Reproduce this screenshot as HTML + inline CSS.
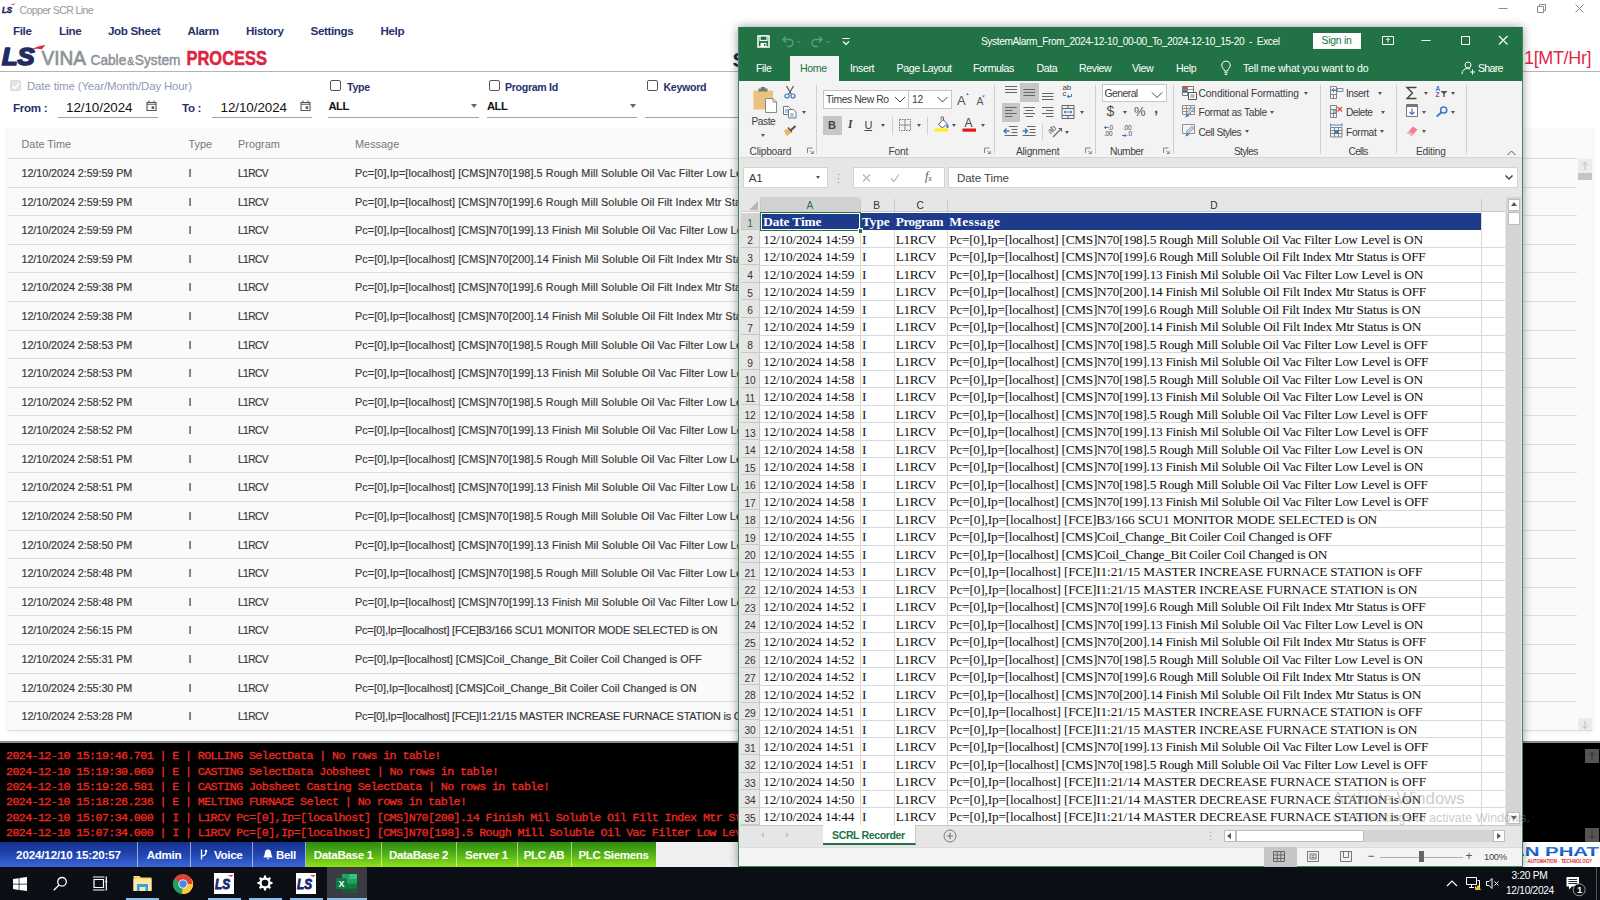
<!DOCTYPE html>
<html lang="en"><head><meta charset="utf-8"><title>Copper SCR Line</title>
<style>
*{box-sizing:border-box;margin:0;padding:0}
html,body{width:1600px;height:900px;overflow:hidden;background:#fff}
body{position:relative;font-family:"Liberation Sans",sans-serif;font-size:10px;color:#222}
.abs,#app *,#xl *,#tb *{position:absolute}
#app span,#xl span,#tb span{white-space:pre;line-height:1}
svg{overflow:visible}
/* ============ background app ============ */
#app{position:absolute;left:0;top:0;width:1600px;height:867px;background:#fff;overflow:hidden}
#ttl{left:19.600px;top:4.5px;font-size:10.5px;color:#979797;letter-spacing:-.6px}
.mn{top:25px;font-size:11.6px;font-weight:bold;color:#27306e;letter-spacing:-.35px}
#hr1{left:0;top:71px;width:1600px;height:1px;background:#b4b4b4}
.flab{font-size:10.6px;font-weight:bold;color:#27306e;letter-spacing:-.3px}
.fval{font-size:13.4px;color:#111;letter-spacing:-.05px}
.ful{height:1.3px;background:#a2a2a2;top:117px}
.cb{width:11px;height:11px;border:1px solid #555;border-radius:2px;background:#fff;top:80px}
#card{left:8px;top:127px;width:1584px;height:604px;border-bottom:1px solid #dcdcdc;clip-path:inset(1px -6px -6px -6px);background:#fafafa;box-shadow:0 0 4px rgba(0,0,0,.10);overflow:hidden}
.ah,.ar{left:0;width:1569px;height:28.58px}
.ah{top:3px;color:#777;font-size:10.9px}
.ar{border-top:1px solid #dedede;font-size:10.8px;color:#333}
.ah span,.ar span{top:9px}
.ar span{letter-spacing:.11px;color:#383838;top:9.4px;-webkit-text-stroke:.18px #383838}
.ar .c1{letter-spacing:-.07px}.ar .c3{font-size:10.2px;letter-spacing:-.55px;top:9.9px}
.ah span{letter-spacing:0;top:8.5px}
.c1{left:13.5px}.c2{left:180.5px}.c3{left:230px}.c4{left:347px}
#log{left:0;top:741px;width:1600px;height:101px;background:#000;border-top:2.400px solid #8e8e8e;overflow:hidden}
.ll{position:static!important;font-family:"Liberation Mono","DejaVu Sans Mono",monospace;font-size:11.7px;color:#f02a22;-webkit-text-stroke:.3px #f02a22;white-space:pre;height:15.3px;line-height:15.3px;letter-spacing:-.62px;padding-left:6px}
#log .ll:first-child{margin-top:6.4px}
/* status bar */
#sb{left:0;top:842px;width:1600px;height:25px;background:#f0f0f0}
.sbb{top:0;height:25px;color:#fff;font-weight:bold;font-size:11.6px;text-align:center;line-height:26.5px;letter-spacing:-.35px;white-space:nowrap;border-right:1px solid rgba(255,255,255,.55)}
.sbb.b{background:linear-gradient(#15318f 0%,#1f43ad 45%,#3b66da 100%)}
.sbb.g{background:linear-gradient(#2c8a10 0%,#4fae14 45%,#90e01a 100%)}
/* ============ excel ============ */
#xlw{position:absolute;left:738px;top:26.500px;width:785px;height:840.500px;background:#e6e6e6;border:1px solid #3c8a5f;box-shadow:0 0 9px rgba(0,0,0,.4)}
#xl{position:absolute;left:0;top:0;width:0;height:0;font-size:10px;color:#262626}
#xl .g{background:#217346}
.xt{color:#fff;font-size:10.6px;top:62.5px;letter-spacing:-.4px}
.rl{font-size:10.2px;color:#3c3c3c;letter-spacing:-.3px}
.gl{font-size:10.2px;color:#444;top:146.8px;letter-spacing:-.22px}
.rsep{width:1px;background:#d0d0d0;top:84.500px;height:69.500px}
.dd{border:2.5px solid transparent;border-top:3px solid #555;border-bottom:0;width:0;height:0}
.lch{width:6px;height:6px}
#grid{left:741px;top:197px;width:764px;height:627.500px;background:#fff;overflow:hidden}
.xr{left:0;width:764px;height:17.5px;font-family:"Liberation Serif",serif;font-size:13.3px;color:#111}
.xr span{top:2.6px;letter-spacing:-.02px}
.xr .rn{font-family:"Liberation Sans",sans-serif;font-size:10.2px;color:#333;left:0;width:19px;height:17.5px;top:0;text-align:center;line-height:21px!important;background:#e6e6e6;border-bottom:1px solid #c8c8c8;border-right:1px solid #c8c8c8;letter-spacing:-.2px}
.xr .xa{left:22.2px;letter-spacing:-.2px}.xr .xb{left:121px}.xr .xc{left:154.8px;letter-spacing:-.42px}.xr .xd{left:208.2px;letter-spacing:-.275px}
.vl{top:15px;width:1px;height:613px;background:#d9d9d9}
.hl{left:19px;width:745px;height:1px;background:#d9d9d9}
/* ============ taskbar ============ */
#tb{position:absolute;left:0;top:867px;width:1600px;height:33px;background:#0b0e14}
.ch{top:4px;font-size:10.2px;color:#333;text-align:center}
</style></head><body>
<div id="app">
<!-- title bar -->
<svg style="left:1.500px;top:3px" width="14" height="12" viewBox="0 0 14 12"><text x="0" y="9.800" font-family="Liberation Sans,sans-serif" font-size="9" font-weight="bold" font-style="italic" fill="#1f2a63" stroke="#1f2a63" stroke-width=".6" textLength="10" lengthAdjust="spacingAndGlyphs">LS</text><path d="M9 1.600 L12.800 .6 L11.500 2.200 Z" fill="#e2283c"/></svg>
<span id="ttl">Copper SCR Line</span>
<svg style="left:1495px;top:3px" width="96" height="14" viewBox="0 0 96 14" fill="none" stroke="#8c8c8c" stroke-width="1"><path d="M3.5 5.5h9"/><path d="M42.5 3.5h6v6h-6z M44.5 3.5v-2h6v6h-2"/><path d="M80.5 1.5l8 8m0-8l-8 8"/></svg>
<!-- menu -->
<span class="mn" style="left:13px">File</span>
<span class="mn" style="left:59px">Line</span>
<span class="mn" style="left:108px">Job Sheet</span>
<span class="mn" style="left:187.5px">Alarm</span>
<span class="mn" style="left:246px">History</span>
<span class="mn" style="left:310.5px">Settings</span>
<span class="mn" style="left:380.5px">Help</span>
<!-- logo -->
<svg style="left:0;top:43px" width="280" height="28" viewBox="0 0 280 28">
<text x="2" y="21.600" font-family="Liberation Sans,sans-serif" font-size="23.500" font-weight="bold" font-style="italic" fill="#232c61" stroke="#232c61" stroke-width="1.700" stroke-linejoin="round" textLength="32.500" lengthAdjust="spacingAndGlyphs">LS</text>
<path d="M31.500 6.400 C35 4.300 39 3 45.500 2 L41.800 6.300 C38.500 5.300 35.500 5.500 31.500 6.400Z" fill="#e0283a"/>
<text x="41.500" y="22.300" font-family="Liberation Sans,sans-serif" font-size="20.500" fill="#8d9398" stroke="#8d9398" stroke-width=".7" textLength="44.500" lengthAdjust="spacingAndGlyphs">VINA</text>
<text x="90.500" y="22.300" font-family="Liberation Sans,sans-serif" font-size="15.500" fill="#8d9398" stroke="#8d9398" stroke-width=".5" textLength="90" lengthAdjust="spacingAndGlyphs">Cable<tspan font-size="11.500" dx="1">&amp;</tspan><tspan dx="1">System</tspan></text>
<text x="186.500" y="22.400" font-family="Liberation Sans,sans-serif" font-size="19.500" font-weight="bold" fill="#dc2440" stroke="#dc2440" stroke-width=".5" textLength="80.500" lengthAdjust="spacingAndGlyphs">PROCESS</text>
</svg>
<span style="left:732.500px;top:48.500px;font-size:21px;font-weight:bold;color:#1c2559">S</span>
<span style="left:1524px;top:48.5px;font-size:18px;color:#e2284a;letter-spacing:-.35px">1[MT/Hr]</span>
<div id="hr1"></div>
<!-- filters -->
<div class="cb" style="left:10px;background:#e4e4e4;border-color:#d8d8d8"></div>
<svg style="left:11px;top:81px" width="10" height="10" viewBox="0 0 10 10"><path d="M1.5 5l2.3 2.3L8.5 2.2" fill="none" stroke="#fff" stroke-width="1.6"/></svg>
<span class="flab" style="left:27px;top:81px;font-size:11.4px;font-weight:normal;color:#8f99b8;letter-spacing:-.12px">Date time (Year/Month/Day Hour)</span>
<span class="flab" style="left:13px;top:101.5px;font-size:11.6px">From :</span>
<span class="fval" style="left:66px;top:100.5px">12/10/2024</span>
<svg class="cal" style="left:146px;top:100px" width="11" height="11" viewBox="0 0 11 11"><path d="M1 2.5h9v8h-9z M1 4.3h9" fill="none" stroke="#555" stroke-width="1.1"/><path d="M3 .6v2M8 .6v2" stroke="#555" stroke-width="1.1"/><rect x="5.6" y="6.3" width="2.6" height="2.6" fill="#555"/></svg>
<div class="ful" style="left:57.5px;width:100px"></div>
<span class="flab" style="left:182px;top:101.5px;font-size:11.6px">To :</span>
<span class="fval" style="left:220.5px;top:100.5px">12/10/2024</span>
<svg class="cal" style="left:300px;top:100px" width="11" height="11" viewBox="0 0 11 11"><path d="M1 2.5h9v8h-9z M1 4.3h9" fill="none" stroke="#555" stroke-width="1.1"/><path d="M3 .6v2M8 .6v2" stroke="#555" stroke-width="1.1"/><rect x="5.6" y="6.3" width="2.6" height="2.6" fill="#555"/></svg>
<div class="ful" style="left:212px;width:100px"></div>
<div class="cb" style="left:330px"></div><span class="flab" style="left:347px;top:82px">Type</span>
<span class="fval" style="left:328.5px;top:101px;font-size:11.2px;font-weight:bold;letter-spacing:-.5px">ALL</span>
<div style="left:471px;top:104px;border:3.5px solid transparent;border-top:4px solid #666;border-bottom:0"></div>
<div class="ful" style="left:328px;width:150.5px"></div>
<div class="cb" style="left:488.5px"></div><span class="flab" style="left:505px;top:82px">Program Id</span>
<span class="fval" style="left:487px;top:101px;font-size:11.2px;font-weight:bold;letter-spacing:-.5px">ALL</span>
<div style="left:629.5px;top:104px;border:3.5px solid transparent;border-top:4px solid #666;border-bottom:0"></div>
<div class="ful" style="left:486.5px;width:150.5px"></div>
<div class="cb" style="left:646.5px"></div><span class="flab" style="left:663.5px;top:82px">Keyword</span>
<div class="ful" style="left:645px;width:150px"></div>
<div id="card">
<div class="ah"><span class="c1">Date Time</span><span class="c2">Type</span><span class="c3">Program</span><span class="c4">Message</span></div>
<div class="ar" style="top:31.00px"><span class="c1">12/10/2024 2:59:59 PM</span><span class="c2">I</span><span class="c3">L1RCV</span><span class="c4">Pc=[0],Ip=[localhost] [CMS]N70[198].5 Rough Mill Soluble Oil Vac Filter Low Level is ON</span></div>
<div class="ar" style="top:60.00px"><span class="c1">12/10/2024 2:59:59 PM</span><span class="c2">I</span><span class="c3">L1RCV</span><span class="c4">Pc=[0],Ip=[localhost] [CMS]N70[199].6 Rough Mill Soluble Oil Filt Index Mtr Status is OFF</span></div>
<div class="ar" style="top:88.00px"><span class="c1">12/10/2024 2:59:59 PM</span><span class="c2">I</span><span class="c3">L1RCV</span><span class="c4">Pc=[0],Ip=[localhost] [CMS]N70[199].13 Finish Mil Soluble Oil Vac Filter Low Level is ON</span></div>
<div class="ar" style="top:117.00px"><span class="c1">12/10/2024 2:59:59 PM</span><span class="c2">I</span><span class="c3">L1RCV</span><span class="c4">Pc=[0],Ip=[localhost] [CMS]N70[200].14 Finish Mil Soluble Oil Filt Index Mtr Status is OFF</span></div>
<div class="ar" style="top:145.00px"><span class="c1">12/10/2024 2:59:38 PM</span><span class="c2">I</span><span class="c3">L1RCV</span><span class="c4">Pc=[0],Ip=[localhost] [CMS]N70[199].6 Rough Mill Soluble Oil Filt Index Mtr Status is ON</span></div>
<div class="ar" style="top:174.00px"><span class="c1">12/10/2024 2:59:38 PM</span><span class="c2">I</span><span class="c3">L1RCV</span><span class="c4">Pc=[0],Ip=[localhost] [CMS]N70[200].14 Finish Mil Soluble Oil Filt Index Mtr Status is ON</span></div>
<div class="ar" style="top:203.00px"><span class="c1">12/10/2024 2:58:53 PM</span><span class="c2">I</span><span class="c3">L1RCV</span><span class="c4">Pc=[0],Ip=[localhost] [CMS]N70[198].5 Rough Mill Soluble Oil Vac Filter Low Level is OFF</span></div>
<div class="ar" style="top:231.00px"><span class="c1">12/10/2024 2:58:53 PM</span><span class="c2">I</span><span class="c3">L1RCV</span><span class="c4">Pc=[0],Ip=[localhost] [CMS]N70[199].13 Finish Mil Soluble Oil Vac Filter Low Level is OFF</span></div>
<div class="ar" style="top:260.00px"><span class="c1">12/10/2024 2:58:52 PM</span><span class="c2">I</span><span class="c3">L1RCV</span><span class="c4">Pc=[0],Ip=[localhost] [CMS]N70[198].5 Rough Mill Soluble Oil Vac Filter Low Level is ON</span></div>
<div class="ar" style="top:288.00px"><span class="c1">12/10/2024 2:58:52 PM</span><span class="c2">I</span><span class="c3">L1RCV</span><span class="c4">Pc=[0],Ip=[localhost] [CMS]N70[199].13 Finish Mil Soluble Oil Vac Filter Low Level is ON</span></div>
<div class="ar" style="top:317.00px"><span class="c1">12/10/2024 2:58:51 PM</span><span class="c2">I</span><span class="c3">L1RCV</span><span class="c4">Pc=[0],Ip=[localhost] [CMS]N70[198].5 Rough Mill Soluble Oil Vac Filter Low Level is OFF</span></div>
<div class="ar" style="top:345.00px"><span class="c1">12/10/2024 2:58:51 PM</span><span class="c2">I</span><span class="c3">L1RCV</span><span class="c4">Pc=[0],Ip=[localhost] [CMS]N70[199].13 Finish Mil Soluble Oil Vac Filter Low Level is OFF</span></div>
<div class="ar" style="top:374.00px"><span class="c1">12/10/2024 2:58:50 PM</span><span class="c2">I</span><span class="c3">L1RCV</span><span class="c4">Pc=[0],Ip=[localhost] [CMS]N70[198].5 Rough Mill Soluble Oil Vac Filter Low Level is ON</span></div>
<div class="ar" style="top:403.00px"><span class="c1">12/10/2024 2:58:50 PM</span><span class="c2">I</span><span class="c3">L1RCV</span><span class="c4">Pc=[0],Ip=[localhost] [CMS]N70[199].13 Finish Mil Soluble Oil Vac Filter Low Level is ON</span></div>
<div class="ar" style="top:431.00px"><span class="c1">12/10/2024 2:58:48 PM</span><span class="c2">I</span><span class="c3">L1RCV</span><span class="c4">Pc=[0],Ip=[localhost] [CMS]N70[198].5 Rough Mill Soluble Oil Vac Filter Low Level is OFF</span></div>
<div class="ar" style="top:460.00px"><span class="c1">12/10/2024 2:58:48 PM</span><span class="c2">I</span><span class="c3">L1RCV</span><span class="c4">Pc=[0],Ip=[localhost] [CMS]N70[199].13 Finish Mil Soluble Oil Vac Filter Low Level is OFF</span></div>
<div class="ar" style="top:488.00px"><span class="c1">12/10/2024 2:56:15 PM</span><span class="c2">I</span><span class="c3">L1RCV</span><span class="c4" style="letter-spacing:-.17px">Pc=[0],Ip=[localhost] [FCE]B3/166 SCU1 MONITOR MODE SELECTED is ON</span></div>
<div class="ar" style="top:517.00px"><span class="c1">12/10/2024 2:55:31 PM</span><span class="c2">I</span><span class="c3">L1RCV</span><span class="c4" style="letter-spacing:0">Pc=[0],Ip=[localhost] [CMS]Coil_Change_Bit Coiler Coil Changed is OFF</span></div>
<div class="ar" style="top:546.00px"><span class="c1">12/10/2024 2:55:30 PM</span><span class="c2">I</span><span class="c3">L1RCV</span><span class="c4" style="letter-spacing:0">Pc=[0],Ip=[localhost] [CMS]Coil_Change_Bit Coiler Coil Changed is ON</span></div>
<div class="ar" style="top:574.00px"><span class="c1">12/10/2024 2:53:28 PM</span><span class="c2">I</span><span class="c3">L1RCV</span><span class="c4" style="letter-spacing:-.17px">Pc=[0],Ip=[localhost] [FCE]I1:21/15 MASTER INCREASE FURNACE STATION is OFF</span></div>
<div style="left:1569.8px;top:32px;width:14px;height:14px;background:#ececec"></div>
<svg style="left:1571.8px;top:34px" width="10" height="10" viewBox="0 0 10 10"><path d="M5 9V1.5M2 4.5l3-3 3 3" fill="none" stroke="#bdbdbd" stroke-width="1"/></svg>
<div style="left:1569.8px;top:46px;width:14px;height:7px;background:#c4c4c4"></div>
<div style="left:1569.8px;top:591.200px;width:14px;height:14px;background:#ececec"></div>
<svg style="left:1571.8px;top:593.200px" width="10" height="10" viewBox="0 0 10 10"><path d="M5 1v7.5M2 5.5l3 3 3-3" fill="none" stroke="#bdbdbd" stroke-width="1"/></svg>
</div>
<div id="log"><div class="ll">2024-12-10 15:19:46.701 | E | ROLLING SelectData | No rows in table!</div><div class="ll">2024-12-10 15:19:30.069 | E | CASTING SelectData Jobsheet | No rows in table!</div><div class="ll">2024-12-10 15:19:26.581 | E | CASTING Jobsheet Casting SelectData | No rows in table!</div><div class="ll">2024-12-10 15:18:26.236 | E | MELTING FURNACE Select | No rows in table!</div><div class="ll">2024-12-10 15:07:34.000 | I | L1RCV Pc=[0],Ip=[localhost] [CMS]N70[200].14 Finish Mil Soluble Oil Filt Index Mtr Status is ON</div><div class="ll">2024-12-10 15:07:34.000 | I | L1RCV Pc=[0],Ip=[localhost] [CMS]N70[198].5 Rough Mill Soluble Oil Vac Filter Low Level is OFF</div><div style="left:1585px;top:5.500px;width:14px;height:14px;background:#555"></div>
<svg style="left:1587px;top:7.500px" width="10" height="10" viewBox="0 0 10 10"><path d="M5 9V1.5M2 4.5l3-3 3 3" fill="none" stroke="#333" stroke-width="1"/></svg>
<div style="left:1585px;top:84.500px;width:14px;height:14px;background:#555"></div>
<svg style="left:1587px;top:86.500px" width="10" height="10" viewBox="0 0 10 10"><path d="M5 1v7.5M2 5.5l3 3 3-3" fill="none" stroke="#333" stroke-width="1"/></svg>
</div>
<div id="sb">
<div class="sbb b" style="left:0;width:138px;letter-spacing:-.15px">2024/12/10 15:20:57</div>
<div class="sbb b" style="left:138px;width:53px">Admin</div>
<div class="sbb b" style="left:191px;width:62px"><svg style="left:9px;top:7px" width="8" height="11" viewBox="0 0 8 11"><path d="M1.5 0.5v10M1.5 7C5 7 6 5.5 6 3" fill="none" stroke="#fff" stroke-width="1.3"/><circle cx="6" cy="2" r="1.3" fill="#fff"/></svg><span style="left:23px;top:7px">Voice</span></div>
<div class="sbb b" style="left:253px;width:53px"><svg style="left:10px;top:7px" width="10" height="11" viewBox="0 0 10 11"><path d="M5 .5c2 0 3.2 1.6 3.2 3.6 0 2.6 1.3 3.6 1.3 4.4H.5c0-.8 1.300-1.800 1.300-4.400C1.800 2.100 3 .5 5 .5zM3.800 9.300h2.400c0 .7-.5 1.200-1.200 1.200s-1.200-.5-1.200-1.200z" fill="#fff"/></svg><span style="left:23px;top:7px">Bell</span></div>
<div class="sbb g" style="left:306px;width:75.5px">DataBase 1</div>
<div class="sbb g" style="left:381.5px;width:75px">DataBase 2</div>
<div class="sbb g" style="left:456.5px;width:61px">Server 1</div>
<div class="sbb g" style="left:517.5px;width:54px">PLC AB</div>
<div class="sbb g" style="left:571.5px;width:84px;border-right:0">PLC Siemens</div>
<!-- right logo peek -->
<svg style="left:1523px;top:0" width="77" height="25" viewBox="0 0 77 25"><defs><linearGradient id="apg" x1="0" y1="0" x2="0" y2="1"><stop offset="0" stop-color="#2a8ce8"/><stop offset="1" stop-color="#0b3fae"/></linearGradient></defs><rect width="77" height="25" fill="#fff"/><text x="-13" y="14.300" font-family="Liberation Sans,sans-serif" font-size="13.300" font-weight="bold" fill="url(#apg)" textLength="89" lengthAdjust="spacingAndGlyphs">AN PHAT</text><text x="4.500" y="21.300" font-family="Liberation Sans,sans-serif" font-size="4.600" font-weight="bold" font-style="italic" fill="#e02020" textLength="64.500" lengthAdjust="spacingAndGlyphs">AUTOMATION - TECHNOLOGY</text></svg>
</div>
</div><!-- /app -->
<div id="xlw"></div>
<div id="xl">
<div class="g" style="left:739px;top:27px;width:783px;height:54px"></div>
<!-- quick access -->
<svg style="left:757px;top:35px" width="13" height="13" viewBox="0 0 13 13"><path d="M1 1h11v11H1z" fill="none" stroke="#fff" stroke-width="1.5"/><rect x="3" y="1" width="7" height="4.5" fill="#217346" stroke="#fff" stroke-width="1.2"/><rect x="3.5" y="8" width="6" height="4" fill="#fff"/><rect x="7" y="9" width="1.500" height="2" fill="#217346"/></svg>
<svg style="left:782px;top:35px" width="70" height="13" viewBox="0 0 70 13" fill="none" stroke="#5e9d7b" stroke-width="1.400"><path d="M1 4.500h6.500a3.500 3.500 0 0 1 0 7H5M4 1.500l-3 3 3 3"/><path d="M40 4.500h-6.500a3.500 3.500 0 0 0 0 7H36M37 1.500l3 3-3 3"/><path d="M15.500 6l1.500 1.800L18.500 6M44.500 6l1.500 1.800L47.500 6" stroke-width="1"/><path d="M60.500 3.500h7M61 6.500l3 3 3-3" stroke="#fff" stroke-width="1.100"/></svg>
<span style="left:981px;top:36.8px;color:#fff;font-size:10.2px;letter-spacing:-.42px">SystemAlarm_From_2024-12-10_00-00_To_2024-12-10_15-20  -  Excel</span>
<div style="left:1312.7px;top:32.5px;width:48px;height:16px;background:#fff"></div>
<span style="left:1321.5px;top:36px;color:#217346;font-size:10.4px;letter-spacing:-.25px">Sign in</span>
<svg style="left:1382px;top:34px" width="130" height="14" viewBox="0 0 130 14" fill="none" stroke="#fff" stroke-width="1"><path d="M.5 2.500h11v8H.5z"/><path d="M6 8.500v-4M4.200 6l1.800-1.800L7.800 6" stroke-width="1"/><path d="M39.500 6.500h9"/><path d="M79.500 2.500h8v8h-8z"/><path d="M117 2l8.500 8.500m0-8.500L117 10.500" stroke-width="1.100"/></svg>
<!-- tabs -->
<div style="left:790px;top:56px;width:48.500px;height:25px;background:#f3f3f3"></div>
<span class="xt" style="left:756px">File</span>
<span class="xt" style="left:800px;color:#217346">Home</span>
<span class="xt" style="left:850px">Insert</span>
<span class="xt" style="left:896.5px">Page Layout</span>
<span class="xt" style="left:973px">Formulas</span>
<span class="xt" style="left:1036.5px">Data</span>
<span class="xt" style="left:1079px">Review</span>
<span class="xt" style="left:1132px">View</span>
<span class="xt" style="left:1176px">Help</span>
<svg style="left:1220px;top:60px" width="12" height="16" viewBox="0 0 12 16" fill="none" stroke="#fff" stroke-width="1"><path d="M6 1a4.300 4.300 0 0 1 2.500 7.800c-.5.500-.8 1.200-.8 2.200H4.300c0-1-.3-1.700-.8-2.200A4.300 4.300 0 0 1 6 1zM4.300 12.800h3.400M4.800 14.500h2.400"/></svg>
<span class="xt" style="left:1243px;letter-spacing:-.2px">Tell me what you want to do</span>
<svg style="left:1461px;top:61px" width="15" height="14" viewBox="0 0 15 14" fill="none" stroke="#fff" stroke-width="1"><circle cx="7" cy="4" r="3"/><path d="M1 13c0-3.500 2.500-5.500 5.500-5.500 1 0 2 .3 2.700.8M11.500 8.500v5M9 11h5"/></svg>
<span class="xt" style="left:1478px;letter-spacing:-.7px">Share</span>
<!-- ribbon -->
<div style="left:739px;top:81px;width:783px;height:77px;background:#f3f3f3;border-bottom:1px solid #d6d6d6"></div>
<div style="left:823px;top:116px;width:19px;height:19px;background:#c6c6c6"></div>
<div style="left:1020px;top:83px;width:18.500px;height:19px;background:#c6c6c6"></div>
<div style="left:1001.500px;top:102.500px;width:18.500px;height:19px;background:#c6c6c6"></div>
<div style="left:823px;top:90px;width:86px;height:18.500px;background:#fff;border:1px solid #c6c6c6"></div>
<div style="left:908px;top:90px;width:44px;height:18.500px;background:#fff;border:1px solid #c6c6c6"></div>
<div style="left:1101.500px;top:83.500px;width:65.500px;height:18.500px;background:#fff;border:1px solid #c6c6c6"></div>
<div class="rsep" style="left:816px"></div><div class="rsep" style="left:994px"></div><div class="rsep" style="left:1094.500px"></div><div class="rsep" style="left:1172.500px"></div><div class="rsep" style="left:1320px"></div><div class="rsep" style="left:1396px"></div><div class="rsep" style="left:1466px"></div>
<div class="rsep" style="left:892px;top:117px;height:18px"></div><div class="rsep" style="left:927px;top:117px;height:18px"></div><div class="rsep" style="left:1042px;top:124px;height:16px"></div>
<svg style="left:739px;top:81px" width="784" height="76" viewBox="739 81 784 76" fill="none">
<!-- paste -->
<path d="M753.500 90.500h19.500v19h-19.500z" fill="#eac27c"/><path d="M758.500 88.500h9v3h-9z" fill="#777"/><path d="M761 87h4v2h-4z" fill="#777"/>
<path d="M765.500 98.500h7.500l3.500 3.500v10.500h-11z" fill="#fff" stroke="#8a8a8a" stroke-width="1"/><path d="M773 98.500v3.500h3.500" stroke="#8a8a8a"/>
<!-- cut -->
<path d="M786.500 86l5 8.500M793.500 86l-5 8.500" stroke="#555" stroke-width="1.200"/><circle cx="787" cy="96" r="2" stroke="#3b78c4" stroke-width="1.200"/><circle cx="793" cy="96" r="2" stroke="#3b78c4" stroke-width="1.200"/>
<!-- copy -->
<path d="M783.500 106.500h5l2 2v6h-7z" fill="#fff" stroke="#777"/><path d="M788.500 109.500h5l2.500 2.500v6h-7.500z" fill="#fff" stroke="#777"/><path d="M785 110h3M785 112h3M790 114h4M790 116h4" stroke="#3b78c4" stroke-width=".8"/>
<!-- painter -->
<path d="M795.500 126l-5 4.500" stroke="#555" stroke-width="2.200"/><path d="M784 131l4.500-3 3.500 4-5 4z" fill="#e8b45e"/><path d="M788 127.500l4 4.500" stroke="#555" stroke-width="1.200"/>
<!-- launchers -->
<g stroke="#777" stroke-width=".9"><path d="M807.500 153v-5h5M810 150.500l3 3M813.300 151v2.500h-2.500"/><path d="M984.500 153v-5h5M987 150.500l3 3M990.300 151v2.500h-2.500"/><path d="M1085.500 153v-5h5M1088 150.500l3 3M1091.300 151v2.500h-2.500"/><path d="M1163.500 153v-5h5M1166 150.500l3 3M1169.300 151v2.500h-2.500"/></g>
<!-- chevrons in combos -->
<g stroke="#444" stroke-width="1"><path d="M895 97l5 5 5-5M937.500 97l5 5 5-5M1152 92.500l5 5 5-5"/></g>
<!-- A^ Av -->
<path d="M966 95l1.500-2 1.500 2z" fill="#3b78c4"/><path d="M982 95.500l1.500 2 1.500-2z" fill="#3b78c4"/>
<!-- borders icon -->
<g stroke="#777" stroke-width="1" stroke-dasharray="1.500 1"><path d="M899.500 119.500h11v11h-11z"/></g><path d="M905 119.500v11M899.500 125h11" stroke="#888" stroke-width="1"/>
<!-- fill bucket -->
<path d="M938.500 124.500l4.500-5 4 4-4.500 4.500z" fill="#fff" stroke="#555" stroke-width="1"/><path d="M941 119.500v-1.500a1.300 1.300 0 0 1 2.600 0v2.500" stroke="#555" stroke-width=".9"/><path d="M947.500 124c.8 1.200 1.200 2 1.200 2.700a1.200 1.200 0 0 1-2.400 0c0-.7.400-1.500 1.200-2.700z" fill="#3b78c4"/>
<rect x="934.500" y="128.500" width="13.500" height="3.200" fill="#ffef1a"/>
<rect x="962.500" y="128.500" width="13.500" height="3.200" fill="#e8141c"/>
<!-- alignment icons -->
<g stroke="#666" stroke-width="1"><path d="M1005 86.500h12M1005 89.500h12M1005 92.500h12"/><path d="M1023.500 89.500h11.500M1023.500 92.500h11.500M1023.500 95.500h11.500"/><path d="M1042 93.500h11.500M1042 96.500h11.500M1042 99.500h11.500"/>
<path d="M1005 107.500h11.500M1005 110.500h7.500M1005 113.500h11.500M1005 116.500h7.500"/><path d="M1023.500 107.500h11.500M1025.500 110.500h7.500M1023.500 113.500h11.500M1025.500 116.500h7.500"/><path d="M1042 107.500h11.500M1046 110.500h7.500M1042 113.500h11.500M1046 116.500h7.500"/>
<path d="M1009 126.500h8.500M1011.500 129.500h6M1011.500 132.500h6M1004.500 135.500h13"/><path d="M1027 126.500h8.500M1029.500 129.500h6M1029.500 132.500h6M1022.500 135.500h13"/></g>
<g stroke="#3b78c4" stroke-width="1.300"><path d="M1009.500 131h-5M1006.500 128.500l-2.500 2.500 2.500 2.500"/><path d="M1022.500 131h5M1025 128.500l2.500 2.500-2.500 2.500"/></g>
<!-- wrap -->
<path d="M1071.500 94v2.500h-4M1069 95l-1.800 1.500 1.800 1.500" stroke="#3b78c4" stroke-width="1"/>
<!-- merge -->
<path d="M1062 105.500h12v13h-12zM1062 108.500h12M1062 115.500h12M1068 105.500v3M1068 115.500v3" stroke="#666" stroke-width="1"/><path d="M1064 112h8M1065.500 110.500l-1.500 1.500 1.500 1.500M1070.500 110.500l1.500 1.500-1.500 1.500" stroke="#3b78c4" stroke-width="1"/>
<!-- orientation -->
<path d="M1053 137l8-8M1058.500 128.500h3v3" stroke="#666" stroke-width="1.100"/>
<!-- decimals arrows -->
<path d="M1104.500 127.500h4M1106 126l-1.500 1.500 1.500 1.500" stroke="#3b78c4" stroke-width="1"/><path d="M1122 135.500h4M1124.500 134l1.500 1.500-1.500 1.500" stroke="#3b78c4" stroke-width="1"/>
<!-- styles icons -->
<path d="M1182.500 86.500h11v9h-11z" fill="#fff" stroke="#777"/><path d="M1182.500 86.500h5v3h-5z" fill="#d2572a"/><path d="M1182.500 89.500h5v3h-5z" fill="#3b78c4"/><path d="M1187.500 86.500v9M1182.500 92.500h11M1187.500 89.500h6" stroke="#777" stroke-width=".8"/><path d="M1188.500 92.500h8v7h-8z" fill="#fff" stroke="#555"/><path d="M1190.500 95h4M1190.500 97h4" stroke="#555" stroke-width=".8"/>
<path d="M1182.500 105.500h12v9h-12zM1186.500 105.500v9M1190.500 105.500v9M1182.500 108.500h12M1182.500 111.500h12" stroke="#777" stroke-width=".8"/><path d="M1186 113l6-6 2 2-6 6z" fill="#b7d3ee" stroke="#777" stroke-width=".6"/><path d="M1185 117.500l2-3.500 2.500 2z" fill="#3b78c4"/>
<path d="M1182.500 124.500h12v9h-12z" stroke="#777" stroke-width=".8"/><path d="M1186 132l6-6 2 2-6 6z" fill="#b7d3ee" stroke="#777" stroke-width=".6"/><path d="M1185 136.500l2-3.500 2.500 2z" fill="#3b78c4"/>
<!-- cells icons -->
<g stroke="#7a7a7a" stroke-width=".9"><path d="M1330.500 86.500h6v12h-6zM1330.500 90.500h6M1330.500 94.500h6M1333.500 94.500v4M1337 88.500h6v3h-6z"/><path d="M1330.500 105.500h6v12h-6zM1330.500 109.500h6M1330.500 113.500h6M1333.500 113.500v4"/><path d="M1330.500 127.500h11.500v9.500h-11.500zM1330.500 130.500h11.500M1330.500 133.500h11.500M1334.500 127.500v9.500M1338.500 127.500v9.500"/></g>
<path d="M1338 90h-6M1334 88l-2 2 2 2" stroke="#3b78c4" stroke-width="1"/><path d="M1333 110.500h3v2.500h-3z" fill="#b7d3ee" stroke="#3b78c4" stroke-width=".6"/><path d="M1337.500 107l4.500 4.500M1342 107l-4.500 4.500" stroke="#e0482e" stroke-width="1.200"/><path d="M1330.500 125h11.500M1330.500 123.500v3M1342 123.500v3" stroke="#3b78c4" stroke-width=".9"/><rect x="1334.500" y="130.500" width="4" height="3" fill="#3b78c4"/>
<!-- editing icons -->
<path d="M1416.500 87.500h-9.500l5.500 5.500-5.500 5.500h9.500" stroke="#444" stroke-width="1.400"/>
<path d="M1406.500 104.500h11v12h-11z" fill="#fff" stroke="#777"/><path d="M1406.500 104.500h11v2.500h-11z" fill="#777"/><path d="M1412 108.500v6M1409.500 112l2.500 2.500 2.500-2.500" stroke="#3b78c4" stroke-width="1.200"/>
<path d="M1407 133l6-6.500 4.500 3-5.500 6.500z" fill="#ee7f96"/><path d="M1407 133l2-2 4.500 3.500-1.500 2z" fill="#f4b3c0"/>
<circle cx="1443.700" cy="110" r="3.100" stroke="#3b78c4" stroke-width="1.500"/><path d="M1441.500 112.300l-4.800 4.200" stroke="#3b78c4" stroke-width="1.800"/>
<path d="M1440.500 91h7l-2.800 3v3h-1.400v-3z" fill="#555"/>
<path d="M1507.500 155l4-4 4 4" stroke="#555" stroke-width="1"/>
</svg>
<!-- ribbon text -->
<span class="rl" style="left:751.500px;top:117px;letter-spacing:-.45px">Paste</span>
<div class="dd" style="left:760.500px;top:133.500px"></div>
<div class="dd" style="left:801.500px;top:111px"></div>
<span class="gl" style="left:749.500px">Clipboard</span>
<span class="rl" style="left:826px;top:95.300px;font-size:10.4px;letter-spacing:-.42px">Times New Ro</span>
<span class="rl" style="left:912px;top:95.300px;font-size:10.4px">12</span>
<span class="rl" style="left:957px;top:93.500px;font-size:13px;color:#555">A</span>
<span class="rl" style="left:976.500px;top:96px;font-size:10.500px;color:#555">A</span>
<span class="rl" style="left:828px;top:119.500px;font-size:11px;font-weight:bold;color:#444">B</span>
<span class="rl" style="left:848px;top:119px;font-size:11.500px;font-style:italic;font-family:'Liberation Serif',serif;color:#444;font-weight:bold">I</span>
<span class="rl" style="left:864.500px;top:119.500px;font-size:11px;text-decoration:underline;color:#444">U</span>
<div class="dd" style="left:880.500px;top:124px"></div>
<div class="dd" style="left:916.500px;top:124px"></div>
<div class="dd" style="left:952px;top:124px"></div>
<div class="dd" style="left:981px;top:124px"></div>
<span class="rl" style="left:964.500px;top:117px;font-size:12px;color:#444">A</span>
<span class="gl" style="left:888.500px">Font</span>
<span class="rl" style="left:1062.500px;top:84.500px;font-size:8px;line-height:6.500px;letter-spacing:-.3px;color:#444">ab<br>c</span>
<div class="dd" style="left:1080px;top:111px"></div>
<span class="rl" style="left:1048px;top:126px;font-size:8px;color:#555;transform:rotate(-40deg);letter-spacing:-.4px">ab</span>
<div class="dd" style="left:1065px;top:131px"></div>
<span class="gl" style="left:1016px">Alignment</span>
<span class="rl" style="left:1104.500px;top:88.800px;font-size:10.400px;letter-spacing:-.55px">General</span>
<span class="rl" style="left:1106.500px;top:104px;font-size:14px;color:#555">$</span>
<div class="dd" style="left:1122.500px;top:111px"></div>
<span class="rl" style="left:1134px;top:105px;font-size:13px;color:#555">%</span>
<span class="rl" style="left:1154px;top:100px;font-size:15px;font-weight:bold;color:#555">,</span>
<span class="rl" style="left:1108px;top:125px;font-size:6.500px;line-height:6.200px;color:#444;letter-spacing:-.2px">.0<br><span style="position:relative!important;left:-4px">.00</span></span>
<span class="rl" style="left:1123px;top:125px;font-size:6.500px;line-height:6.200px;color:#444;letter-spacing:-.2px">.00<br><span style="position:relative!important;left:4px">.0</span></span>
<span class="gl" style="left:1110px;letter-spacing:-.45px">Number</span>
<span class="rl" style="left:1198.500px;top:89.200px;letter-spacing:-.1px">Conditional Formatting</span><div class="dd" style="left:1304px;top:91.500px"></div>
<span class="rl" style="left:1198.500px;top:108.400px">Format as Table</span><div class="dd" style="left:1270px;top:110.500px"></div>
<span class="rl" style="left:1198.500px;top:127.600px;letter-spacing:-.5px">Cell Styles</span><div class="dd" style="left:1245px;top:129.500px"></div>
<span class="gl" style="left:1234px;letter-spacing:-.7px">Styles</span>
<span class="rl" style="left:1346px;top:89.200px;letter-spacing:-.5px">Insert</span><div class="dd" style="left:1378px;top:91.500px"></div>
<span class="rl" style="left:1346px;top:108.400px;letter-spacing:-.5px">Delete</span><div class="dd" style="left:1381px;top:110.500px"></div>
<span class="rl" style="left:1346px;top:127.600px">Format</span><div class="dd" style="left:1380px;top:129.500px"></div>
<span class="gl" style="left:1348.500px;letter-spacing:-.7px">Cells</span>
<div class="dd" style="left:1423.500px;top:91.500px"></div><div class="dd" style="left:1451px;top:91.500px"></div>
<div class="dd" style="left:1422px;top:110.500px"></div><div class="dd" style="left:1451px;top:110.500px"></div>
<div class="dd" style="left:1422px;top:129.500px"></div>
<span class="rl" style="left:1435.500px;top:85.500px;font-size:6.500px;line-height:6.500px;color:#3b78c4;font-weight:bold">A<br><span style="position:relative!important;color:#8a3fb8">Z</span></span>
<span class="gl" style="left:1416px">Editing</span>
<!-- formula bar -->
<div style="left:743px;top:167px;width:85px;height:21px;background:#fff;border:1px solid #d4d4d4"></div>
<span class="rl" style="left:748.800px;top:172px;font-size:11.600px">A1</span>
<div class="dd" style="left:816px;top:176px"></div>
<svg style="left:837px;top:173px" width="3" height="11" viewBox="0 0 3 11"><circle cx="1.500" cy="1.500" r=".8" fill="#aaa"/><circle cx="1.500" cy="5.500" r=".8" fill="#aaa"/><circle cx="1.500" cy="9.500" r=".8" fill="#aaa"/></svg>
<div style="left:852.500px;top:167px;width:92px;height:21px;background:#fff;border:1px solid #d4d4d4"></div>
<svg style="left:860px;top:172px" width="80" height="12" viewBox="0 0 80 12" fill="none" stroke="#b5b5b5" stroke-width="1.200"><path d="M3 2.500l7 7m0-7l-7 7"/><path d="M31 6.500l2.800 3 5.200-7"/></svg>
<span style="left:925px;top:170px;font-family:'Liberation Serif',serif;font-style:italic;font-size:12px;color:#555">f<span style="position:relative!important;font-size:8px;top:1px">x</span></span>
<div style="left:948px;top:167px;width:570px;height:21px;background:#fff;border:1px solid #d4d4d4"></div>
<span class="rl" style="left:957px;top:172px;font-size:11.600px;color:#444;letter-spacing:-.1px">Date Time</span>
<svg style="left:1504px;top:174px" width="10" height="7" viewBox="0 0 10 7"><path d="M1.500 1.500l3.500 3.500 3.500-3.500" fill="none" stroke="#444" stroke-width="1.500"/></svg>
<div id="grid">
<div style="left:0;top:0;width:764px;height:15px;background:#e6e6e6;border-bottom:1px solid #c8c8c8"></div>
<svg style="left:7px;top:3px" width="11" height="11" viewBox="0 0 11 11"><path d="M10 1v9H1z" fill="#b8b8b8"/></svg>
<div style="left:19px;top:0;width:100px;height:15px;background:#d2d2d2"></div>
<span class="ch" style="left:19px;width:100px;color:#217346">A</span>
<span class="ch" style="left:119px;width:33.500px">B</span>
<span class="ch" style="left:152.500px;width:53.500px">C</span>
<span class="ch" style="left:206px;width:534px">D</span>
<div class="vl" style="left:18.500px;top:2px;height:13px;background:#c8c8c8"></div><div class="vl" style="left:119px;top:2px;height:13px;background:#c8c8c8"></div><div class="vl" style="left:152.500px;top:2px;height:13px;background:#c8c8c8"></div><div class="vl" style="left:206px;top:2px;height:13px;background:#c8c8c8"></div><div class="vl" style="left:740px;top:2px;height:13px;background:#c8c8c8"></div>
<div class="vl" style="left:119px"></div><div class="vl" style="left:152.500px"></div><div class="vl" style="left:206px"></div><div class="vl" style="left:740px"></div>
<div class="xr" style="top:15.750px;font-weight:bold;color:#fff"><div style="left:19px;top:0;width:721px;height:17.500px;background:#1e3a8a"></div><span class="rn" style="background:#d2d2d2;color:#217346;font-weight:normal;">1</span><span class="xa" style="letter-spacing:-.1px">Date Time</span><span class="xb" style="left:121px">Type</span><span class="xc" style="letter-spacing:-.5px">Program</span><span class="xd" style="letter-spacing:.45px">Message</span>
</div>

<div class="xr" style="top:33.25px"><div class="hl" style="top:17px"></div><span class="rn">2</span><span class="xa">12/10/2024 14:59</span><span class="xb">I</span><span class="xc">L1RCV</span><span class="xd">Pc=[0],Ip=[localhost] [CMS]N70[198].5 Rough Mill Soluble Oil Vac Filter Low Level is ON</span></div>
<div class="xr" style="top:50.75px"><div class="hl" style="top:17px"></div><span class="rn">3</span><span class="xa">12/10/2024 14:59</span><span class="xb">I</span><span class="xc">L1RCV</span><span class="xd">Pc=[0],Ip=[localhost] [CMS]N70[199].6 Rough Mill Soluble Oil Filt Index Mtr Status is OFF</span></div>
<div class="xr" style="top:68.25px"><div class="hl" style="top:17px"></div><span class="rn">4</span><span class="xa">12/10/2024 14:59</span><span class="xb">I</span><span class="xc">L1RCV</span><span class="xd">Pc=[0],Ip=[localhost] [CMS]N70[199].13 Finish Mil Soluble Oil Vac Filter Low Level is ON</span></div>
<div class="xr" style="top:85.75px"><div class="hl" style="top:17px"></div><span class="rn">5</span><span class="xa">12/10/2024 14:59</span><span class="xb">I</span><span class="xc">L1RCV</span><span class="xd">Pc=[0],Ip=[localhost] [CMS]N70[200].14 Finish Mil Soluble Oil Filt Index Mtr Status is OFF</span></div>
<div class="xr" style="top:103.25px"><div class="hl" style="top:17px"></div><span class="rn">6</span><span class="xa">12/10/2024 14:59</span><span class="xb">I</span><span class="xc">L1RCV</span><span class="xd">Pc=[0],Ip=[localhost] [CMS]N70[199].6 Rough Mill Soluble Oil Filt Index Mtr Status is ON</span></div>
<div class="xr" style="top:120.75px"><div class="hl" style="top:17px"></div><span class="rn">7</span><span class="xa">12/10/2024 14:59</span><span class="xb">I</span><span class="xc">L1RCV</span><span class="xd">Pc=[0],Ip=[localhost] [CMS]N70[200].14 Finish Mil Soluble Oil Filt Index Mtr Status is ON</span></div>
<div class="xr" style="top:138.25px"><div class="hl" style="top:17px"></div><span class="rn">8</span><span class="xa">12/10/2024 14:58</span><span class="xb">I</span><span class="xc">L1RCV</span><span class="xd">Pc=[0],Ip=[localhost] [CMS]N70[198].5 Rough Mill Soluble Oil Vac Filter Low Level is OFF</span></div>
<div class="xr" style="top:155.75px"><div class="hl" style="top:17px"></div><span class="rn">9</span><span class="xa">12/10/2024 14:58</span><span class="xb">I</span><span class="xc">L1RCV</span><span class="xd">Pc=[0],Ip=[localhost] [CMS]N70[199].13 Finish Mil Soluble Oil Vac Filter Low Level is OFF</span></div>
<div class="xr" style="top:173.25px"><div class="hl" style="top:17px"></div><span class="rn">10</span><span class="xa">12/10/2024 14:58</span><span class="xb">I</span><span class="xc">L1RCV</span><span class="xd">Pc=[0],Ip=[localhost] [CMS]N70[198].5 Rough Mill Soluble Oil Vac Filter Low Level is ON</span></div>
<div class="xr" style="top:190.75px"><div class="hl" style="top:17px"></div><span class="rn">11</span><span class="xa">12/10/2024 14:58</span><span class="xb">I</span><span class="xc">L1RCV</span><span class="xd">Pc=[0],Ip=[localhost] [CMS]N70[199].13 Finish Mil Soluble Oil Vac Filter Low Level is ON</span></div>
<div class="xr" style="top:208.25px"><div class="hl" style="top:17px"></div><span class="rn">12</span><span class="xa">12/10/2024 14:58</span><span class="xb">I</span><span class="xc">L1RCV</span><span class="xd">Pc=[0],Ip=[localhost] [CMS]N70[198].5 Rough Mill Soluble Oil Vac Filter Low Level is OFF</span></div>
<div class="xr" style="top:225.75px"><div class="hl" style="top:17px"></div><span class="rn">13</span><span class="xa">12/10/2024 14:58</span><span class="xb">I</span><span class="xc">L1RCV</span><span class="xd">Pc=[0],Ip=[localhost] [CMS]N70[199].13 Finish Mil Soluble Oil Vac Filter Low Level is OFF</span></div>
<div class="xr" style="top:243.25px"><div class="hl" style="top:17px"></div><span class="rn">14</span><span class="xa">12/10/2024 14:58</span><span class="xb">I</span><span class="xc">L1RCV</span><span class="xd">Pc=[0],Ip=[localhost] [CMS]N70[198].5 Rough Mill Soluble Oil Vac Filter Low Level is ON</span></div>
<div class="xr" style="top:260.75px"><div class="hl" style="top:17px"></div><span class="rn">15</span><span class="xa">12/10/2024 14:58</span><span class="xb">I</span><span class="xc">L1RCV</span><span class="xd">Pc=[0],Ip=[localhost] [CMS]N70[199].13 Finish Mil Soluble Oil Vac Filter Low Level is ON</span></div>
<div class="xr" style="top:278.25px"><div class="hl" style="top:17px"></div><span class="rn">16</span><span class="xa">12/10/2024 14:58</span><span class="xb">I</span><span class="xc">L1RCV</span><span class="xd">Pc=[0],Ip=[localhost] [CMS]N70[198].5 Rough Mill Soluble Oil Vac Filter Low Level is OFF</span></div>
<div class="xr" style="top:295.75px"><div class="hl" style="top:17px"></div><span class="rn">17</span><span class="xa">12/10/2024 14:58</span><span class="xb">I</span><span class="xc">L1RCV</span><span class="xd">Pc=[0],Ip=[localhost] [CMS]N70[199].13 Finish Mil Soluble Oil Vac Filter Low Level is OFF</span></div>
<div class="xr" style="top:313.25px"><div class="hl" style="top:17px"></div><span class="rn">18</span><span class="xa">12/10/2024 14:56</span><span class="xb">I</span><span class="xc">L1RCV</span><span class="xd" style="letter-spacing:-.165px">Pc=[0],Ip=[localhost] [FCE]B3/166 SCU1 MONITOR MODE SELECTED is ON</span></div>
<div class="xr" style="top:330.75px"><div class="hl" style="top:17px"></div><span class="rn">19</span><span class="xa">12/10/2024 14:55</span><span class="xb">I</span><span class="xc">L1RCV</span><span class="xd">Pc=[0],Ip=[localhost] [CMS]Coil_Change_Bit Coiler Coil Changed is OFF</span></div>
<div class="xr" style="top:348.25px"><div class="hl" style="top:17px"></div><span class="rn">20</span><span class="xa">12/10/2024 14:55</span><span class="xb">I</span><span class="xc">L1RCV</span><span class="xd">Pc=[0],Ip=[localhost] [CMS]Coil_Change_Bit Coiler Coil Changed is ON</span></div>
<div class="xr" style="top:365.75px"><div class="hl" style="top:17px"></div><span class="rn">21</span><span class="xa">12/10/2024 14:53</span><span class="xb">I</span><span class="xc">L1RCV</span><span class="xd" style="letter-spacing:-.165px">Pc=[0],Ip=[localhost] [FCE]I1:21/15 MASTER INCREASE FURNACE STATION is OFF</span></div>
<div class="xr" style="top:383.25px"><div class="hl" style="top:17px"></div><span class="rn">22</span><span class="xa">12/10/2024 14:53</span><span class="xb">I</span><span class="xc">L1RCV</span><span class="xd" style="letter-spacing:-.165px">Pc=[0],Ip=[localhost] [FCE]I1:21/15 MASTER INCREASE FURNACE STATION is ON</span></div>
<div class="xr" style="top:400.75px"><div class="hl" style="top:17px"></div><span class="rn">23</span><span class="xa">12/10/2024 14:52</span><span class="xb">I</span><span class="xc">L1RCV</span><span class="xd">Pc=[0],Ip=[localhost] [CMS]N70[199].6 Rough Mill Soluble Oil Filt Index Mtr Status is OFF</span></div>
<div class="xr" style="top:418.25px"><div class="hl" style="top:17px"></div><span class="rn">24</span><span class="xa">12/10/2024 14:52</span><span class="xb">I</span><span class="xc">L1RCV</span><span class="xd">Pc=[0],Ip=[localhost] [CMS]N70[199].13 Finish Mil Soluble Oil Vac Filter Low Level is ON</span></div>
<div class="xr" style="top:435.75px"><div class="hl" style="top:17px"></div><span class="rn">25</span><span class="xa">12/10/2024 14:52</span><span class="xb">I</span><span class="xc">L1RCV</span><span class="xd">Pc=[0],Ip=[localhost] [CMS]N70[200].14 Finish Mil Soluble Oil Filt Index Mtr Status is OFF</span></div>
<div class="xr" style="top:453.25px"><div class="hl" style="top:17px"></div><span class="rn">26</span><span class="xa">12/10/2024 14:52</span><span class="xb">I</span><span class="xc">L1RCV</span><span class="xd">Pc=[0],Ip=[localhost] [CMS]N70[198].5 Rough Mill Soluble Oil Vac Filter Low Level is ON</span></div>
<div class="xr" style="top:470.75px"><div class="hl" style="top:17px"></div><span class="rn">27</span><span class="xa">12/10/2024 14:52</span><span class="xb">I</span><span class="xc">L1RCV</span><span class="xd">Pc=[0],Ip=[localhost] [CMS]N70[199].6 Rough Mill Soluble Oil Filt Index Mtr Status is ON</span></div>
<div class="xr" style="top:488.25px"><div class="hl" style="top:17px"></div><span class="rn">28</span><span class="xa">12/10/2024 14:52</span><span class="xb">I</span><span class="xc">L1RCV</span><span class="xd">Pc=[0],Ip=[localhost] [CMS]N70[200].14 Finish Mil Soluble Oil Filt Index Mtr Status is ON</span></div>
<div class="xr" style="top:505.75px"><div class="hl" style="top:17px"></div><span class="rn">29</span><span class="xa">12/10/2024 14:51</span><span class="xb">I</span><span class="xc">L1RCV</span><span class="xd" style="letter-spacing:-.165px">Pc=[0],Ip=[localhost] [FCE]I1:21/15 MASTER INCREASE FURNACE STATION is OFF</span></div>
<div class="xr" style="top:523.25px"><div class="hl" style="top:17px"></div><span class="rn">30</span><span class="xa">12/10/2024 14:51</span><span class="xb">I</span><span class="xc">L1RCV</span><span class="xd" style="letter-spacing:-.165px">Pc=[0],Ip=[localhost] [FCE]I1:21/15 MASTER INCREASE FURNACE STATION is ON</span></div>
<div class="xr" style="top:540.75px"><div class="hl" style="top:17px"></div><span class="rn">31</span><span class="xa">12/10/2024 14:51</span><span class="xb">I</span><span class="xc">L1RCV</span><span class="xd">Pc=[0],Ip=[localhost] [CMS]N70[199].13 Finish Mil Soluble Oil Vac Filter Low Level is OFF</span></div>
<div class="xr" style="top:558.25px"><div class="hl" style="top:17px"></div><span class="rn">32</span><span class="xa">12/10/2024 14:51</span><span class="xb">I</span><span class="xc">L1RCV</span><span class="xd">Pc=[0],Ip=[localhost] [CMS]N70[198].5 Rough Mill Soluble Oil Vac Filter Low Level is OFF</span></div>
<div class="xr" style="top:575.75px"><div class="hl" style="top:17px"></div><span class="rn">33</span><span class="xa">12/10/2024 14:50</span><span class="xb">I</span><span class="xc">L1RCV</span><span class="xd" style="letter-spacing:-.165px">Pc=[0],Ip=[localhost] [FCE]I1:21/14 MASTER DECREASE FURNACE STATION is OFF</span></div>
<div class="xr" style="top:593.25px"><div class="hl" style="top:17px"></div><span class="rn">34</span><span class="xa">12/10/2024 14:50</span><span class="xb">I</span><span class="xc">L1RCV</span><span class="xd" style="letter-spacing:-.165px">Pc=[0],Ip=[localhost] [FCE]I1:21/14 MASTER DECREASE FURNACE STATION is ON</span></div>
<div class="xr" style="top:610.75px"><div class="hl" style="top:17px"></div><span class="rn">35</span><span class="xa">12/10/2024 14:44</span><span class="xb">I</span><span class="xc">L1RCV</span><span class="xd" style="letter-spacing:-.165px">Pc=[0],Ip=[localhost] [FCE]I1:21/14 MASTER DECREASE FURNACE STATION is OFF</span></div>
<div style="left:18.500px;top:15px;width:101.500px;height:19.200px;border:1.500px solid #217346;box-shadow:inset 0 0 0 1px #fff"></div><div style="left:116.500px;top:31px;width:5.500px;height:5.500px;background:#217346;border:1px solid #fff"></div>

</div><!-- vertical scrollbar -->
<div style="left:1506px;top:197px;width:15px;height:628px;background:#d4d4d4"></div>
<div style="left:1507.500px;top:198.500px;width:12.500px;height:12px;background:#fff;border:1px solid #bdbdbd"></div>
<div style="left:1510.700px;top:202px;border:3px solid transparent;border-bottom:4px solid #555;border-top:0;width:0;height:0"></div>
<div style="left:1507.500px;top:211.500px;width:12.500px;height:13px;background:#fff;border:1px solid #bdbdbd"></div>
<div style="left:1507px;top:811.500px;width:13px;height:12px;background:#fff;border:1px solid #bdbdbd"></div>
<div style="left:1510.500px;top:816px;border:3px solid transparent;border-top:4px solid #555;border-bottom:0;width:0;height:0"></div>
<!-- sheet tabs -->
<div style="left:739px;top:824.500px;width:783px;height:22px;background:#e6e6e6;border-top:1px solid #c8c8c8"></div>
<div style="left:761px;top:832px;border:3px solid transparent;border-right:3.500px solid #c4c4c4;border-left:0"></div>
<div style="left:786px;top:832px;border:3px solid transparent;border-left:3.500px solid #c4c4c4;border-right:0"></div>
<div style="left:823px;top:824.500px;width:93px;height:20.500px;background:#fff;border-bottom:2px solid #217346;border-right:1px solid #c8c8c8"></div>
<span style="left:832px;top:829.500px;font-size:10.600px;font-weight:bold;color:#217346;letter-spacing:-.42px">SCRL Recorder</span>
<svg style="left:943px;top:829px" width="14" height="14" viewBox="0 0 14 14" fill="none" stroke="#777" stroke-width="1"><circle cx="7" cy="7" r="6"/><path d="M7 3.800v6.400M3.800 7h6.400" stroke-width="1.200"/></svg>
<svg style="left:1209px;top:831px" width="3" height="10" viewBox="0 0 3 10"><circle cx="1.500" cy="1.200" r=".8" fill="#aaa"/><circle cx="1.500" cy="5" r=".8" fill="#aaa"/><circle cx="1.500" cy="8.800" r=".8" fill="#aaa"/></svg>
<div style="left:1223.500px;top:830px;width:281.500px;height:12px;background:#d4d4d4"></div>
<div style="left:1223.500px;top:830px;width:12.500px;height:12px;background:#fff;border:1px solid #bdbdbd"></div>
<div style="left:1227px;top:833px;border:3px solid transparent;border-right:4px solid #555;border-left:0"></div>
<div style="left:1236px;top:830px;width:128px;height:12px;background:#fff;border:1px solid #bdbdbd"></div>
<div style="left:1492.500px;top:830px;width:12.500px;height:12px;background:#fff;border:1px solid #bdbdbd"></div>
<div style="left:1497px;top:833px;border:3px solid transparent;border-left:4px solid #555;border-right:0"></div>
<!-- status bar -->
<div style="left:739px;top:846.500px;width:783px;height:19.500px;background:#f3f3f3;border-top:1px solid #dcdcdc"></div>
<div style="left:1263.500px;top:847px;width:33.500px;height:19.500px;background:#c6c6c6"></div>
<svg style="left:1273px;top:850px" width="80" height="13" viewBox="0 0 80 13" fill="none" stroke="#666" stroke-width="1"><path d="M.5 1.500h11v10H.5zM.5 5h11M.5 8.500h11M4.200 1.500v10M7.800 1.500v10"/><path d="M34.500 1.500h11v10h-11zM37 4h6v5h-6zM38.500 5.800h3M38.500 7.500h3" stroke-width=".9"/><path d="M67.500 1.500h11v10h-11zM70.500 1.500v6h5v-6" stroke-width=".9"/></svg>
<span style="left:1367.500px;top:850px;font-size:12px;color:#555">−</span>
<div style="left:1380px;top:856.500px;width:83px;height:1px;background:#b0b0b0"></div>
<div style="left:1419px;top:851px;width:4.500px;height:11px;background:#666"></div>
<span style="left:1465.500px;top:850px;font-size:12px;color:#555">+</span>
<span style="left:1484px;top:851.500px;font-size:9.400px;color:#444;letter-spacing:-.3px">100%</span>
<!-- activate windows watermark -->
<span style="left:1332.500px;top:791px;font-size:16.700px;color:rgba(150,150,150,.5);letter-spacing:.03px">Activate Windows</span>
<span style="left:1332.500px;top:811.800px;font-size:12.500px;color:rgba(150,150,150,.5);letter-spacing:0">Go to Settings to activate Windows.</span>
</div><!-- /xl -->
<div id="tb">
<div style="left:327px;top:0;width:40px;height:33px;background:#393c42"></div>
<!-- underlines -->
<div style="left:126px;top:31px;width:33px;height:2px;background:#86bdee"></div>
<div style="left:207.500px;top:31px;width:33px;height:2px;background:#86bdee"></div>
<div style="left:248.500px;top:31px;width:33px;height:2px;background:#86bdee"></div>
<div style="left:289.500px;top:31px;width:33px;height:2px;background:#86bdee"></div>
<div style="left:327px;top:31px;width:40px;height:2px;background:#86bdee"></div>
<!-- start -->
<svg style="left:13px;top:10px" width="14" height="14" viewBox="0 0 14 14" fill="#fff"><path d="M0 2l5.700-.8v5.500H0zM6.400 1.100L14 0v6.700H6.400zM0 7.400h5.700v5.500L0 12.100zM6.400 7.400H14V14l-7.600-1.100z"/></svg>
<!-- search -->
<svg style="left:53px;top:9px" width="15" height="15" viewBox="0 0 15 15" fill="none" stroke="#fff" stroke-width="1.300"><circle cx="9" cy="5.800" r="4.300"/><path d="M6 9L.8 14.200"/></svg>
<!-- task view -->
<svg style="left:92px;top:8.500px" width="16" height="15" viewBox="0 0 16 15" fill="none" stroke="#fff" stroke-width="1.200"><path d="M2 3.500h9.500v8H2zM1 1h11.500M1 14h11.500M14.300 .5v14"/><circle cx="14.300" cy="5.500" r="1.100" fill="#fff" stroke="none"/></svg>
<!-- explorer -->
<svg style="left:133px;top:9px" width="19" height="15" viewBox="0 0 19 15"><path d="M.5 0h6l1.500 1.500H18.500V15H.5z" fill="#f7d36b"/><path d="M.5 3h18v12H.5z" fill="#ffe9a2"/><path d="M4 8h11v7h-2.500v-4h-6v4H4z" fill="#2fa3e6"/></svg>
<!-- chrome -->
<svg style="left:173px;top:6.500px" width="20" height="20" viewBox="0 0 20 20"><circle cx="10" cy="10" r="10" fill="#dc4437"/><path d="M10 10L1.300 5A10 10 0 0 0 9 20z" fill="#1ea362"/><path d="M10 10l-1 10A10 10 0 0 0 18.700 5z" fill="#fccd36"/><path d="M10 10h9.500A10 10 0 0 0 1.300 5z" fill="#dc4437"/><circle cx="10" cy="10" r="4.600" fill="#fff"/><circle cx="10" cy="10" r="3.700" fill="#4688f4"/></svg>
<!-- LS -->
<div style="left:214px;top:6px;width:20px;height:20.500px;background:#fff"></div>
<svg style="left:214px;top:6.300px" width="20" height="20" viewBox="0 0 20 20"><text x="1" y="15.500" font-family="Liberation Sans,sans-serif" font-size="14.500" font-weight="bold" font-style="italic" fill="#1a2672" stroke="#1a2672" stroke-width=".9" textLength="15" lengthAdjust="spacingAndGlyphs">LS</text><path d="M13.500 2.600l5.800-.8-1.600 1.900z" fill="#e0283a"/></svg>
<!-- settings -->
<svg style="left:256.700px;top:8.400px" width="16" height="16" viewBox="0 0 16 16"><path d="M6.80 2.43L6.99 0.47L9.01 0.47L9.20 2.43L11.09 3.21L12.61 1.96L14.04 3.39L12.79 4.91L13.57 6.80L15.53 6.99L15.53 9.01L13.57 9.20L12.79 11.09L14.04 12.61L12.61 14.04L11.09 12.79L9.20 13.57L9.01 15.53L6.99 15.53L6.80 13.57L4.91 12.79L3.39 14.04L1.96 12.61L3.21 11.09L2.43 9.20L0.47 9.01L0.47 6.99L2.43 6.80L3.21 4.91L1.96 3.39L3.39 1.96L4.91 3.21Z" fill="#fff"/><circle cx="8" cy="8" r="3.300" fill="#0b0e14"/></svg>
<div style="left:296px;top:6px;width:20px;height:20.500px;background:#fff"></div>
<svg style="left:296px;top:6.300px" width="20" height="20" viewBox="0 0 20 20"><text x="1" y="15.500" font-family="Liberation Sans,sans-serif" font-size="14.500" font-weight="bold" font-style="italic" fill="#1a2672" stroke="#1a2672" stroke-width=".9" textLength="15" lengthAdjust="spacingAndGlyphs">LS</text><path d="M13.500 2.600l5.800-.8-1.600 1.900z" fill="#e0283a"/></svg>
<!-- excel -->
<svg style="left:336px;top:7px" width="21" height="19" viewBox="0 0 21 19"><path d="M6 0h14a1 1 0 0 1 1 1v17a1 1 0 0 1-1 1H6z" fill="#21a366"/><path d="M13.500 0H20a1 1 0 0 1 1 1v4h-7.500z" fill="#33c481"/><path d="M13.500 5H21v4.700h-7.500z" fill="#21a366"/><path d="M6 9.700h7.500v4.700H6z" fill="#107c41"/><path d="M13.500 9.700H21v4.700h-7.500z" fill="#107c41"/><path d="M6 14.300h15V18a1 1 0 0 1-1 1H6z" fill="#185c37"/><rect x="0" y="4" width="11" height="11" rx="1" fill="#107c41"/><text x="2.600" y="13" font-family="Liberation Sans,sans-serif" font-size="9" font-weight="bold" fill="#fff">X</text></svg>
<!-- tray -->
<svg style="left:1446px;top:12px" width="12" height="8" viewBox="0 0 12 8" fill="none" stroke="#fff" stroke-width="1.200"><path d="M1 7l5-5 5 5"/></svg>
<svg style="left:1466px;top:9px" width="15" height="15" viewBox="0 0 15 15" fill="none" stroke="#fff" stroke-width="1"><path d="M.5 1.500h10v7H.5zM3 11.500h5M5.500 8.500v3M11.500 4.500h2v8h-4v-2"/><path d="M9 14l3-5.500 3 5.500z" fill="#f8c11c" stroke="none"/></svg>
<svg style="left:1486px;top:10px" width="14" height="13" viewBox="0 0 14 13" fill="none" stroke="#fff" stroke-width="1"><path d="M.5 4.500h2.500l3-3v10l-3-3H.5z"/><path d="M8.500 4.500l4 4m0-4l-4 4"/></svg>
<span style="left:1511.500px;top:3.500px;font-size:10.200px;color:#fff;letter-spacing:-.3px">3:20 PM</span>
<span style="left:1506px;top:19px;font-size:10.200px;color:#fff;letter-spacing:-.3px">12/10/2024</span>
<svg style="left:1565.500px;top:8.500px" width="22" height="22" viewBox="0 0 22 22"><path d="M.5 1h12.500v9.500H6L3 13.500v-3H.5z" fill="#fff"/><path d="M2.500 3.500h8.500M2.500 5.500h8.500M2.500 7.500h8.500" stroke="#0b0e14" stroke-width=".9"/><circle cx="13.200" cy="13.800" r="6" fill="#0b0e14" stroke="#9a9a9a" stroke-width="1"/><text x="11" y="17.300" font-family="Liberation Sans,sans-serif" font-size="9.500" font-weight="bold" fill="#fff">1</text></svg>
<div style="left:1596px;top:0;width:1px;height:33px;background:#555"></div>
</div>
</body></html>
